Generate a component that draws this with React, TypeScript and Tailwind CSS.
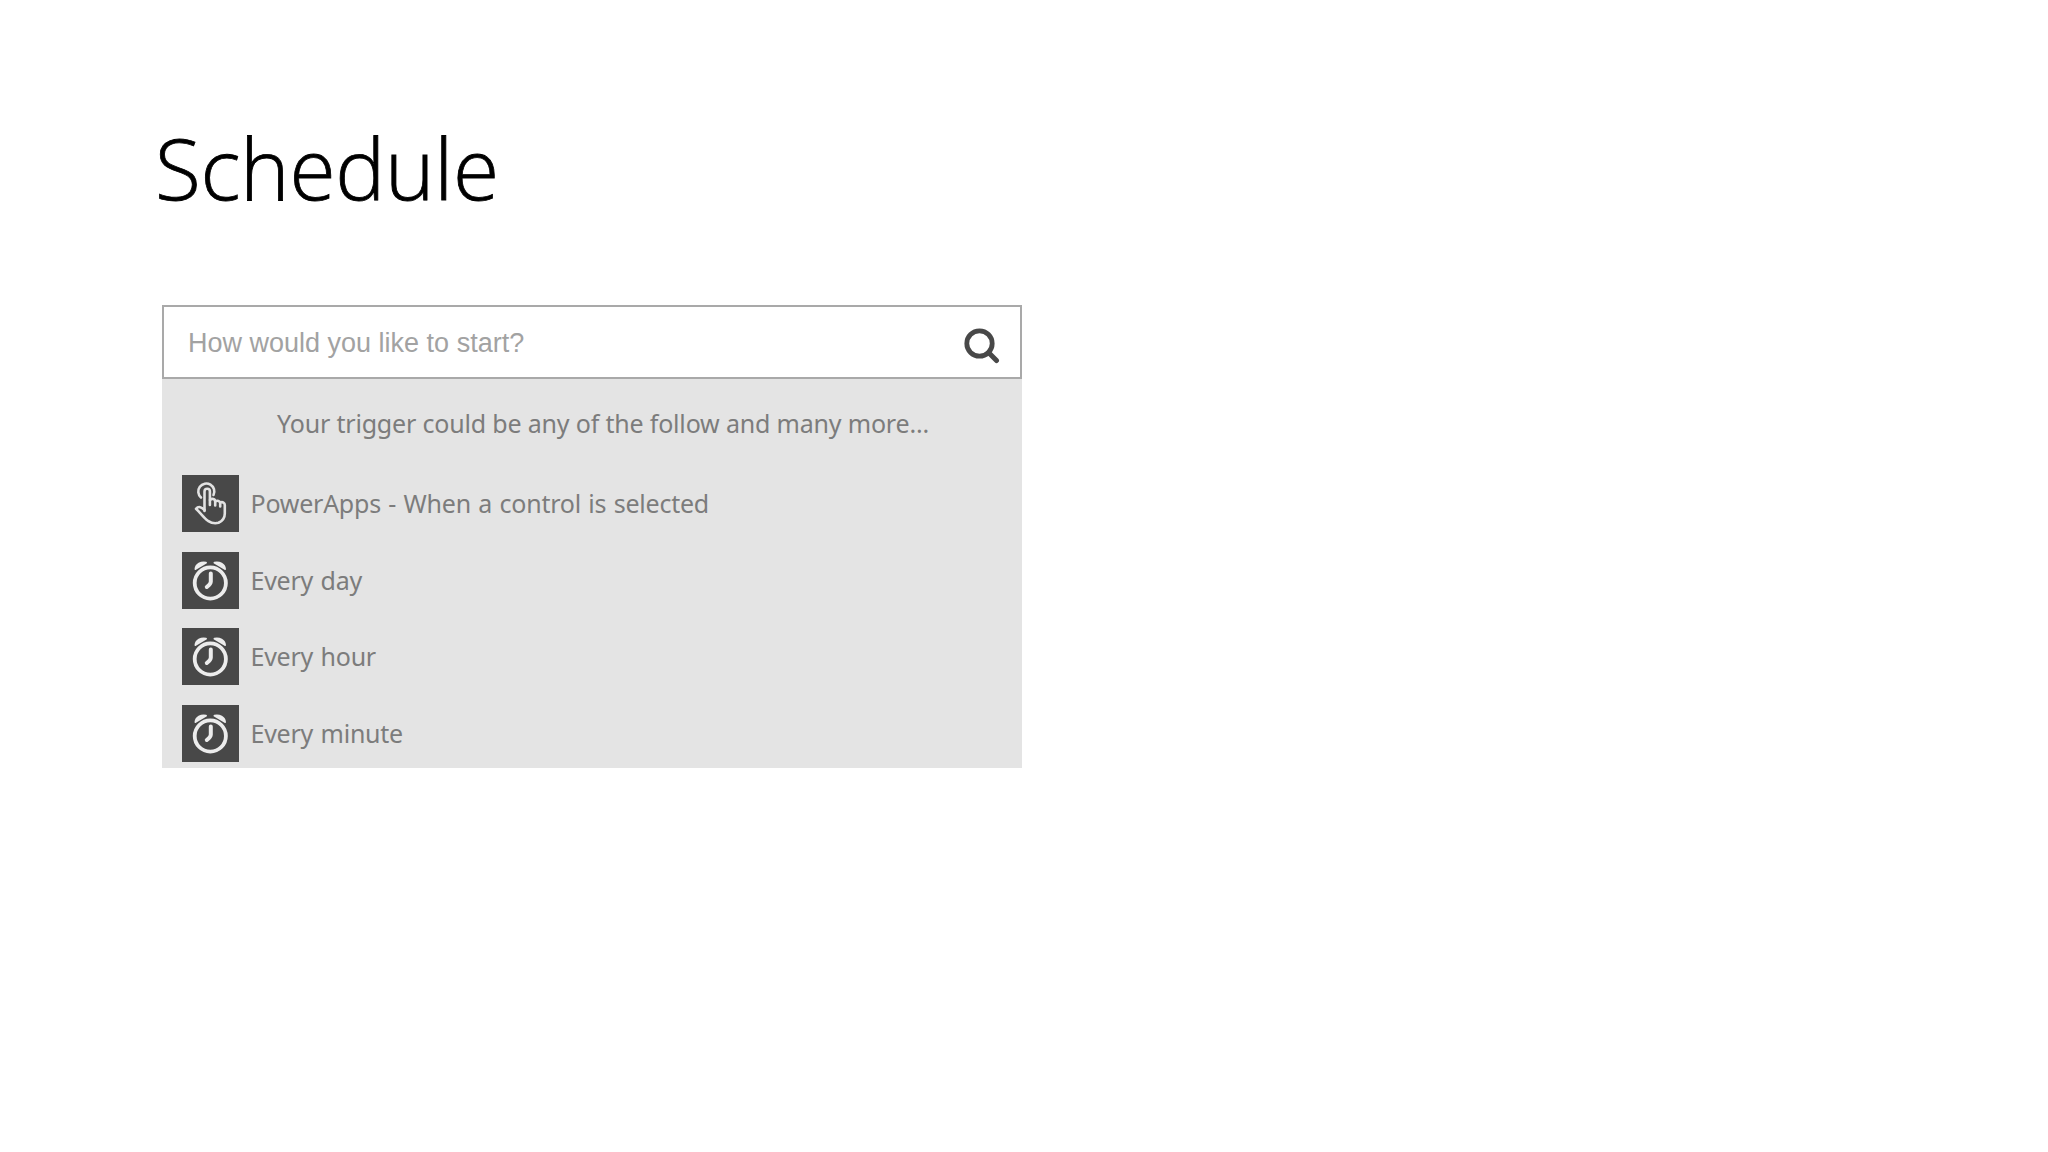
import React from "react";

const ClockIcon = () => {
  return (
    <svg viewBox="0 0 57 57" className="h-[57px] w-[57px]" fill="none" stroke="#ececec" strokeLinecap="round" strokeLinejoin="round">
      <circle cx="28.3" cy="31" r="15.6" strokeWidth="3.8" />
      <path d="M28.8 21.5V29.5c0 2-1.5 3.5-4 5.5" strokeWidth="4" />
      <path d="M13.5 17c.5-4.5 5.5-7.5 10.5-6.3z" fill="#ececec" strokeWidth="2" />
      <path d="M43 17c-.5-4.5-5.5-7.5-10.5-6.3z" fill="#ececec" strokeWidth="2" />
    </svg>
  );
};

const TouchIcon = () => {
  return (
    <svg viewBox="0 0 57 57" className="h-[57px] w-[57px]" fill="none" stroke="#e2e2e2" strokeWidth="2.6" strokeLinecap="round" strokeLinejoin="round">
      <path d="M19 22.5a8 8 0 1 1 12.5-2.5" />
      <path d="M22.5 36V16.5a2.7 2.7 0 0 1 5.4 0V30" />
      <path d="M28 25c2-2 5.2-1 5.2 1.5V30.5" />
      <path d="M33.2 26.5c2-1.5 5-.5 5 1.5V31.5" />
      <path d="M38.2 27.5c2.5-1 4.6.3 4.6 2.5v8.5c0 4.5-2.3 7.5-6.3 9.3-4 1-7.5 0-10.5-2-4-2.8-7-7.5-12-12 2.5-3 5.5-1.8 8.5 1.2" />
    </svg>
  );
};

const triggers = [
  { name: "PowerApps - When a control is selected", icon: <TouchIcon /> },
  { name: "Every day", icon: <ClockIcon /> },
  { name: "Every hour", icon: <ClockIcon /> },
  { name: "Every minute", icon: <ClockIcon /> },
];

const App = () => {
  return (
    <main className="h-[1152px] w-full bg-white pt-[116px] pl-[162px]">
      <h1 className="-ml-[7px] h-[189px] font-['Open_Sans',sans-serif] text-[84px] leading-[104px] font-light tracking-[-0.3px] whitespace-nowrap text-black [-webkit-text-stroke:0.8px_black]">
        <span>Schedule</span>
      </h1>
      <section className="h-[463px] w-[860px] bg-[#e4e4e4]">
        {/* Search */}
        <div className="flex h-[74px] items-center justify-between border-2 border-[#a9a9a9] bg-white pr-5 pl-6">
          <span className="mt-0.5 font-['Liberation_Sans',sans-serif] text-[27px] whitespace-nowrap text-[#a2a2a2]">
            How would you like to start?
          </span>
          <svg viewBox="0 0 36 36" className="mt-2 h-9 w-9" fill="none" stroke="#484848">
            <circle cx="15.5" cy="15.5" r="12.7" strokeWidth="4.8" />
            <path d="M24.5 24.5l8 8" strokeWidth="5" strokeLinecap="round" />
          </svg>
        </div>
        {/* Trigger list */}
        <p className="h-[96px] pt-[26px] pl-[115px] font-['Noto_Sans',sans-serif] text-[25px] leading-9 tracking-[-0.18px] whitespace-nowrap text-[#7c7c7c]">
          <span>Your trigger could be any of the follow and many more...</span>
        </p>
        <ul className="flex flex-col gap-[19.5px] pl-[19.5px]">
          {triggers.map((trigger) => (
            <li key={trigger.name} className="flex h-[57px] items-center gap-3">
              <div className="h-[57px] w-[57px] bg-[#484848]">{trigger.icon}</div>
              <span className="pt-px font-['Noto_Sans',sans-serif] text-[25px] tracking-[-0.24px] whitespace-nowrap text-[#7c7c7c] [word-spacing:1.2px]">
                {trigger.name}
              </span>
            </li>
          ))}
        </ul>
      </section>
    </main>
  );
};

export default App;
